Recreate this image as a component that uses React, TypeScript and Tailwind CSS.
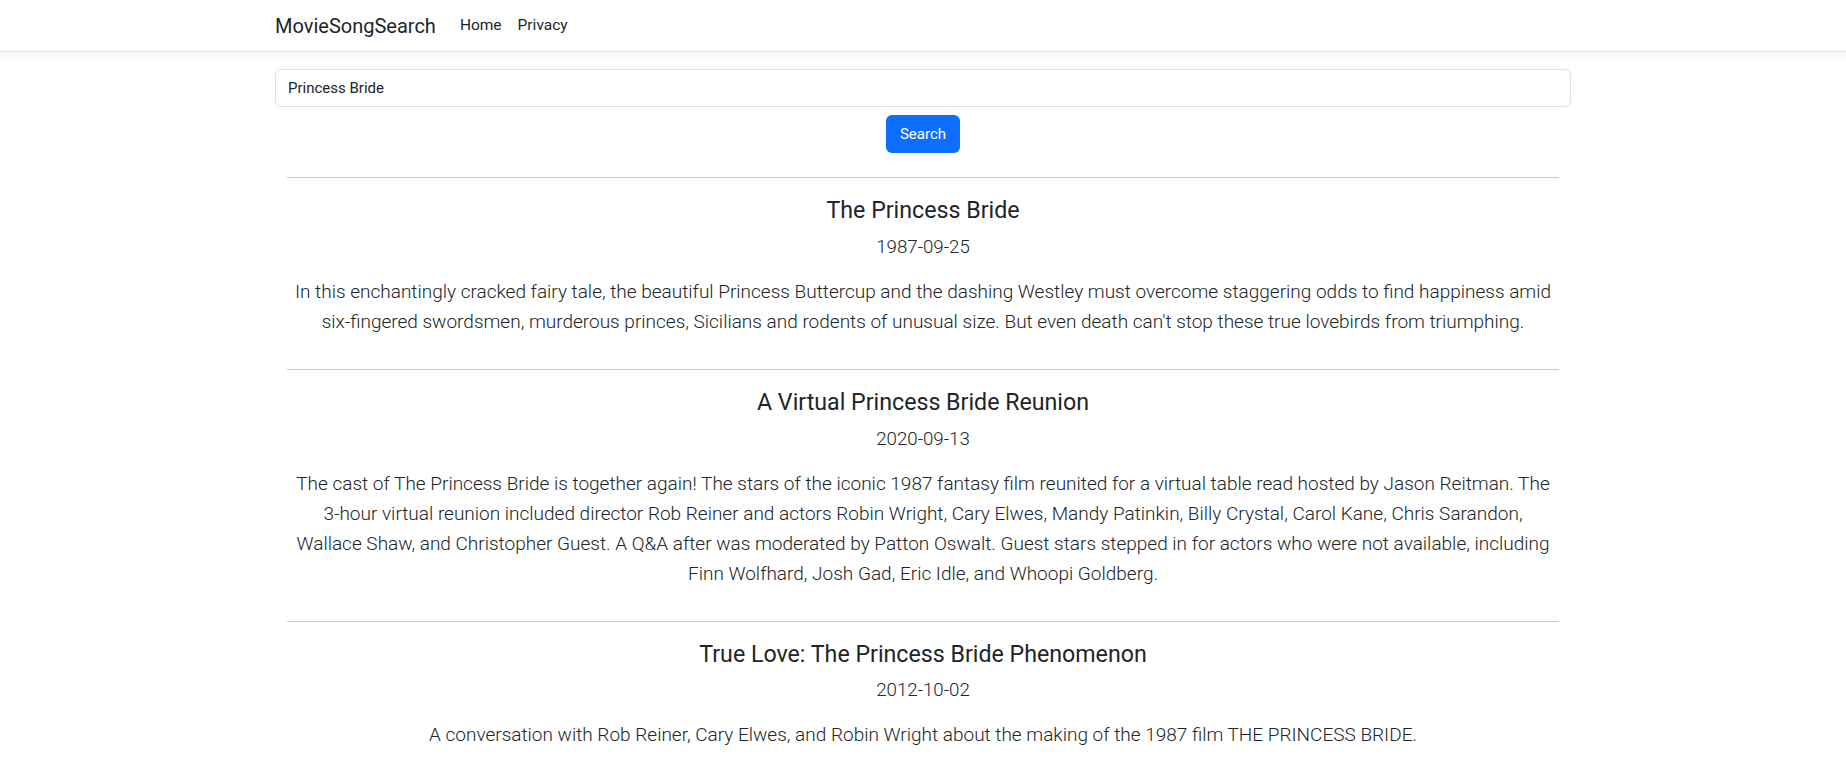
import { useState } from 'react'

type Movie = {
  title: string
  date: string
  overview: string
}

// line breaks follow the original layout
const movies: Movie[] = [
  {
    title: 'The Princess Bride',
    date: '1987-09-25',
    overview:
      "In this enchantingly cracked fairy tale, the beautiful Princess Buttercup and the dashing Westley must overcome staggering odds to find happiness amid\nsix-fingered swordsmen, murderous princes, Sicilians and rodents of unusual size. But even death can't stop these true lovebirds from triumphing.",
  },
  {
    title: 'A Virtual Princess Bride Reunion',
    date: '2020-09-13',
    overview:
      'The cast of The Princess Bride is together again! The stars of the iconic 1987 fantasy film reunited for a virtual table read hosted by Jason Reitman. The\n3-hour virtual reunion included director Rob Reiner and actors Robin Wright, Cary Elwes, Mandy Patinkin, Billy Crystal, Carol Kane, Chris Sarandon,\nWallace Shaw, and Christopher Guest. A Q&A after was moderated by Patton Oswalt. Guest stars stepped in for actors who were not available, including\nFinn Wolfhard, Josh Gad, Eric Idle, and Whoopi Goldberg.',
  },
  {
    title: 'True Love: The Princess Bride Phenomenon',
    date: '2012-10-02',
    overview:
      'A conversation with Rob Reiner, Cary Elwes, and Robin Wright about the making of the 1987 film THE PRINCESS BRIDE.',
  },
]

export default function App() {
  const [query, setQuery] = useState('Princess Bride')

  return (
    <div className="min-h-screen bg-white text-[#212529] font-['Roboto','Open_Sans',sans-serif]">
      <header className="bg-white border-b border-[#dee2e6] shadow-[0_4px_12px_rgba(0,0,0,0.05)]">
        <nav className="max-w-[1320px] mx-auto px-3 h-[51px] flex items-center">
          <a href="#" className="text-[20px] mr-4 pt-[1px] text-[#212529]">
            MovieSongSearch
          </a>
          <a href="#" className="px-2 text-[15.5px] pt-[1px] text-[#212529]">
            Home
          </a>
          <a href="#" className="px-2 text-[15.5px] pt-[1px] text-[#212529]">
            Privacy
          </a>
        </nav>
      </header>

      <main className="max-w-[1320px] mx-auto px-3 pt-[17px]">
        <input
          type="text"
          value={query}
          onChange={(e) => setQuery(e.target.value)}
          className="w-full h-[38px] border border-[#dee2e6] rounded-md px-3 text-[15px] text-[#212529] outline-none"
        />
        <div className="flex justify-center mt-2">
          <button className="h-[38px] px-[14px] bg-[#0d6efd] text-white text-[15px] rounded-md">
            Search
          </button>
        </div>

        <div className="px-3 pt-2 flex flex-col">
          {movies.map((movie) => (
            <div key={movie.title} className="flex flex-col">
              <hr className="my-4 border-t border-[#c8c9ca]" />
              <h4 className="text-center text-[23.2px] leading-[28.8px] pt-[2px] mb-[6px]">{movie.title}</h4>
              <p className="text-center text-[18.7px] font-light leading-[30px] pt-[1px] mb-[15px]">{movie.date}</p>
              <p className="text-center text-[19px] font-light leading-[30px] mb-4 whitespace-pre-line">
                {movie.overview}
              </p>
            </div>
          ))}
        </div>
      </main>
    </div>
  )
}
